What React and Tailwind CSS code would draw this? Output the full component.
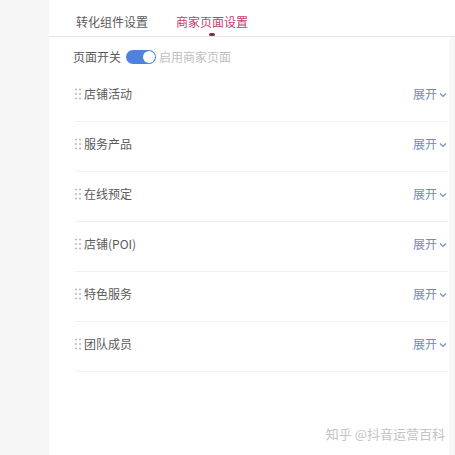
import React from "react";

const items = ["店铺活动", "服务产品", "在线预定", "店铺(POI)", "特色服务", "团队成员"];

function Handle() {
  return (
    <svg width="6" height="12" viewBox="0 0 6 12" className="mr-[3px] shrink-0">
      {[1.5, 6, 10.5].map((y) =>
        [1, 5].map((x) => <rect key={`${x}-${y}`} x={x - 0.75} y={y - 0.75} width="1.5" height="1.5" fill="#a0a0a0" />)
      )}
    </svg>
  );
}

function Chevron() {
  return (
    <svg width="8" height="6" viewBox="0 0 8 6" className="ml-[2px] mt-[2px]">
      <path d="M1 1.5 L4 4.5 L7 1.5" fill="none" stroke="#6f8bc0" strokeWidth="1.1" />
    </svg>
  );
}

export default function App() {
  return (
    <div
      className="w-[455px] h-[455px] flex bg-[#f6f6f6] overflow-hidden"
      style={{ fontFamily: '"Noto Sans CJK SC", "Noto Sans", sans-serif' }}
    >
      <div className="w-[49px] shrink-0" />
      <div className="flex-1 bg-white flex flex-col">
        <div className="h-[37px] border-b border-[#e6e6e6] flex items-start pl-[27px] pt-[13px] gap-[28px] text-[12px] leading-[18px]">
          <span className="text-[#5a5a5a]">转化组件设置</span>
          <span className="relative text-[#c2406e]">
            商家页面设置
            <span className="absolute left-[33px] top-[20px] w-[6px] h-[3px] rounded-full bg-[#8e2b4a]" />
          </span>
        </div>
        <div className="flex flex-1">
          <div className="flex-1 flex flex-col pl-[24px] pr-[1px]">
            <div className="mt-[12px] h-[16px] flex items-center text-[12px] leading-[16px]">
              <span className="text-[#5a5a5a]">页面开关</span>
              <span className="ml-[5px] w-[30px] h-[14px] rounded-full bg-[#4f82dd] relative">
                <span className="absolute right-[1px] top-[1px] w-[12px] h-[12px] rounded-full bg-white" />
              </span>
              <span className="ml-[3px] text-[#c0c0c0]">启用商家页面</span>
            </div>
            <div className="mt-[7px] flex flex-col pl-[2px]">
              {items.map((t) => (
                <div key={t} className="h-[50px] border-b border-[#efefef] flex items-start justify-between pt-[14px]">
                  <div className="flex items-center text-[12px] leading-[16px] text-[#5a5a5a]">
                    <Handle />
                    <span>{t}</span>
                  </div>
                  <div className="flex items-center text-[12px] leading-[16px] text-[#6f8bc0] pr-[1px]">
                    <span>展开</span>
                    <Chevron />
                  </div>
                </div>
              ))}
            </div>
            <div className="flex-1 flex items-end justify-end pb-[13px] pr-[3px]">
              <span className="text-[13px] leading-[16px] text-[#c4c4c4]">知乎 @抖音运营百科</span>
            </div>
          </div>
          <div className="w-[6px] bg-[#f8f8f8]" />
        </div>
      </div>
    </div>
  );
}
